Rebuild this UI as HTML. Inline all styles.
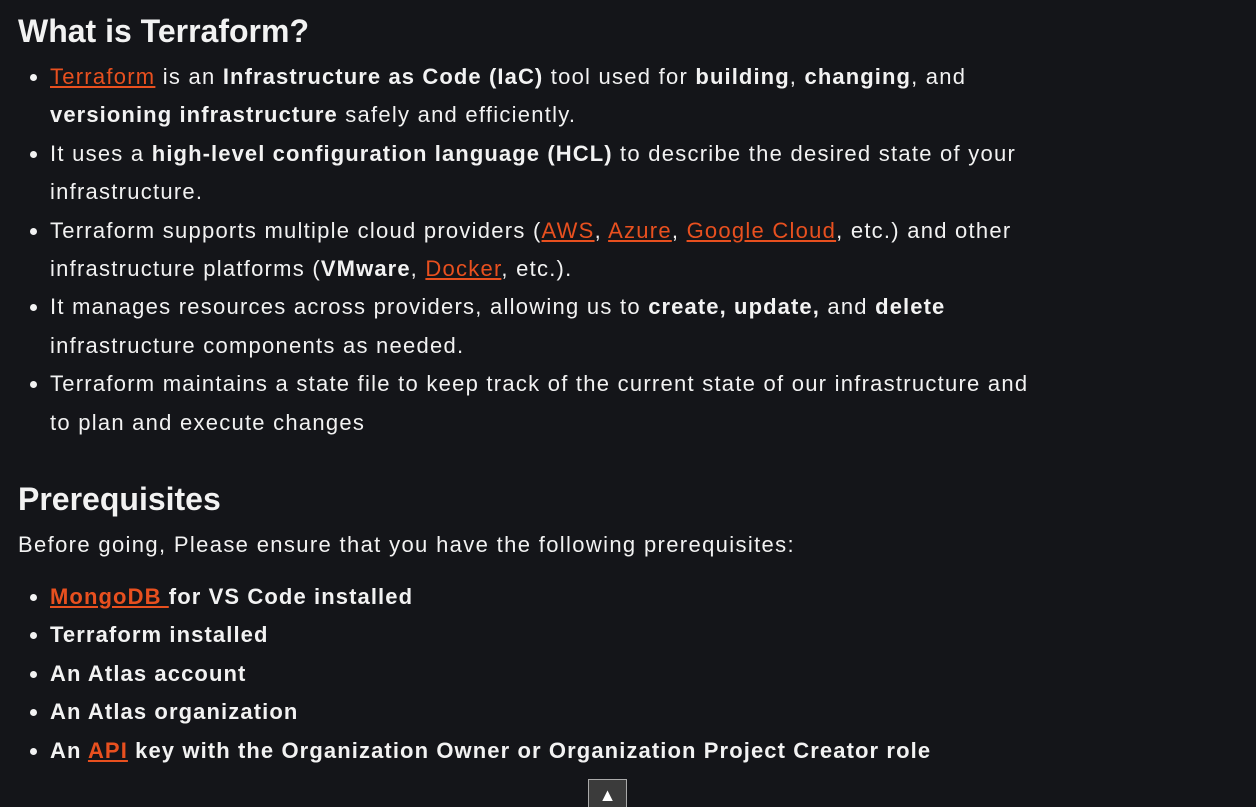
<!DOCTYPE html>
<html><head><meta charset="utf-8"><style>
html,body{margin:0;background:#141519;color:#f2f2f2;font-family:"Liberation Sans",sans-serif;width:1256px;height:807px;overflow:hidden;position:relative}
.c{position:absolute;left:18px;top:0;width:1200px}
h2{font-size:32px;font-weight:bold;margin:0;position:absolute;left:0;line-height:40px}
ul{position:absolute;left:0;margin:0;padding-left:32px;font-size:22px;line-height:38.4px;width:1150px;white-space:nowrap;letter-spacing:1.25px}
b{letter-spacing:1.1px}
a{color:#e8501f;text-decoration:underline}
p{position:absolute;left:0;margin:0;font-size:22px;line-height:38px;letter-spacing:1.35px;white-space:nowrap}
.btn{position:absolute;left:588px;top:779px;width:39px;height:32px;background:#3b3b3b;border:1px solid #aaa;box-sizing:border-box;color:#fff;text-align:center;font-size:18px;line-height:30px}
</style></head><body><div class="c">
<h2 style="top:11px">What is Terraform?</h2>
<ul style="top:58px">
<li><a>Terraform</a> is an <b>Infrastructure as Code (IaC)</b> tool used for <b>building</b>, <b>changing</b>, and<br><b>versioning infrastructure</b> safely and efficiently.</li>
<li>It uses a <b>high-level configuration language (HCL)</b> to describe the desired state of your<br>infrastructure.</li>
<li>Terraform supports multiple cloud providers (<a>AWS</a>, <a>Azure</a>, <a>Google Cloud</a>, etc.) and other<br>infrastructure platforms (<b>VMware</b>, <a>Docker</a>, etc.).</li>
<li>It manages resources across providers, allowing us to <b>create, update,</b> and <b>delete</b><br>infrastructure components as needed.</li>
<li>Terraform maintains a state file to keep track of the current state of our infrastructure and<br>to plan and execute changes</li>
</ul>
<h2 style="top:479px">Prerequisites</h2>
<p style="top:526px">Before going, Please ensure that you have the following prerequisites:</p>
<ul style="top:578px;font-weight:bold;letter-spacing:1.1px">
<li><a>MongoDB </a>for VS Code installed</li>
<li>Terraform installed</li>
<li>An Atlas account</li>
<li>An Atlas organization</li>
<li>An <a>API</a> key with the Organization Owner or Organization Project Creator role</li>
</ul>
</div>
<div class="btn">▲</div>
</body></html>
